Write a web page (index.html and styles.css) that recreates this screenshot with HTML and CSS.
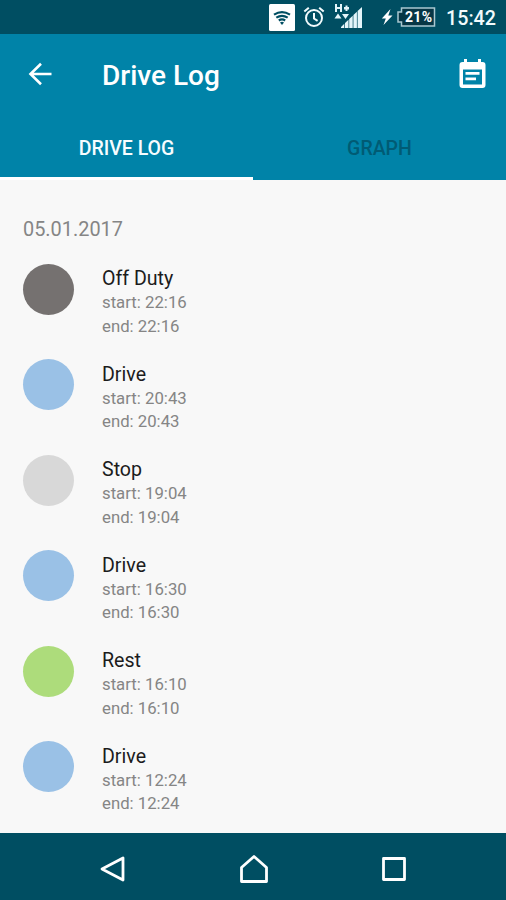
FILE: index.html
```html
<!DOCTYPE html>
<html lang="en">
<head>
<meta charset="utf-8">
<title>Drive Log</title>
<link rel="stylesheet" href="styles.css">
</head>
<body>
<div class="screen">
  <div class="status">
    <svg class="wifi" width="26" height="27" viewBox="0 0 26 27"><rect width="26" height="27" rx="1.5" fill="#fff"/><g fill="none" stroke="#004e62" stroke-width="2.200"><path d="M5 10.600Q13 5.600 21 10.600M7.300 13.600Q13 10 18.700 13.600M9.800 16.500Q13 14.300 16.200 16.500"/></g><path d="M11 18.400Q13 17 15 18.400L13 21z" fill="#004e62"/></svg>
    <svg class="alarm" width="22" height="22" viewBox="0 0 22 22" fill="none" stroke="#f2fbfd" stroke-width="2"><circle cx="11" cy="12" r="8"/><path d="M11 7v5.500l3.600 2.300M1.300 5.600l4.500-3.900M20.700 5.600l-4.500-3.900"/></svg>
    <svg class="signal" width="29" height="26" viewBox="0 0 29 26"><g fill="#e4f5fa"><path d="M1 1h2v3h3V1h2v8H6V6H3v3H1zM10 4h1.500V2.500h2V4H15v2.500h-1.500V8h-2V6.500H10zM.5 15.500l3.500-5 3.500 5zM8 11h7l-3.500 5z"/><path d="M7 25v-1l3.300-3.200V25zM11 25v-5l3.500-3.200V25zM15.200 25v-9l3.500-3.200V25zM19.400 25V12l3.500-3.200V25zM23.600 25V8L28 4v21z"/></g></svg>
    <svg class="bolt" width="12" height="18" viewBox="0 0 12 18"><path d="M9.500 1L.8 10.500h4L2.500 17 11.500 7.500H7.300z" fill="#fff"/></svg>
    <svg class="case" width="39" height="20" viewBox="0 0 39 20"><path d="M4.500 1h33v18h-33v-4H1V5h3.500z" fill="#063645" stroke="#a9c8d1" stroke-width="1.500"/><text class="percent" x="21.500" y="15" text-anchor="middle" textLength="27">21%</text></svg>
    <span class="clock">15:42</span>
  </div>
  <header class="header">
    <div class="toolbar">
      <svg class="back" width="24" height="24" viewBox="0 0 24 24" fill="none" stroke="#fff" stroke-width="2.600"><path d="M23.500 12H2.500M13 1.800L2.500 12 13 22.200"/></svg>
      <h1 class="title">Drive Log</h1>
      <svg class="calendar" width="27" height="31" viewBox="0 0 27 31"><path fill="#fff" fill-rule="evenodd" d="M5 1h3v3h11V1h3v3h1.500Q26.500 4 26.500 7v20q0 3-3 3h-20q-3 0-3-3V7q0-3 3-3H5zM4 11.500V26.500h19V11.500zM6.500 14h14v2.700h-14zM6.500 19.500h10.500v2.700h-10.500z"/></svg>
    </div>
    <nav class="tabs"><div class="tab active"><span>DRIVE LOG</span></div><div class="tab"><span>GRAPH</span></div></nav>
  </header>
  <main class="log">
    <div class="date">05.01.2017</div>
    <div class="entry"><i class="dot off"></i><div class="info"><b>Off Duty</b><span>start: 22:16</span><span>end: 22:16</span></div></div>
    <div class="entry"><i class="dot drive"></i><div class="info"><b>Drive</b><span>start: 20:43</span><span>end: 20:43</span></div></div>
    <div class="entry"><i class="dot stop"></i><div class="info"><b>Stop</b><span>start: 19:04</span><span>end: 19:04</span></div></div>
    <div class="entry"><i class="dot drive"></i><div class="info"><b>Drive</b><span>start: 16:30</span><span>end: 16:30</span></div></div>
    <div class="entry"><i class="dot rest"></i><div class="info"><b>Rest</b><span>start: 16:10</span><span>end: 16:10</span></div></div>
    <div class="entry"><i class="dot drive"></i><div class="info"><b>Drive</b><span>start: 12:24</span><span>end: 12:24</span></div></div>
  </main>
  <footer class="navbar">
    <svg width="28" height="30" viewBox="0 0 28 30"><path d="M24 4v22L3 15z"/></svg>
    <svg width="30" height="30" viewBox="0 0 30 30"><path d="M15 2.500L27.500 13.500v14h-25v-14z"/></svg>
    <svg width="28" height="30" viewBox="0 0 28 30"><path d="M3.500 4.500h21v21h-21z"/></svg>
  </footer>
</div>
</body>
</html>
```

FILE: styles.css
```css
* { box-sizing: border-box; }
body { margin: 0; font-family: Roboto, "Liberation Sans", sans-serif; }
.screen { width: 506px; height: 900px; display: flex; flex-direction: column; background: #f8f8f8; overflow: hidden; }
.status { height: 34px; flex: none; display: flex; align-items: center; padding-left: 269px; background: #004e62; }
.alarm { margin-left: 8px; }
.signal { margin: -2px 0 0 9px; }
.bolt { margin-left: 18px; }
.case { margin-left: 4px; }
.percent { font-size: 14px; font-weight: 700; fill: #fff; }
.clock { margin: 3px 0 0 10px; font-size: 19.700px; font-weight: 500; line-height: 24px; color: #f2fbfd; }
.header { height: 146px; flex: none; background: #0083a8; color: #fff; }
.toolbar { height: 82px; display: flex; align-items: center; padding-left: 28px; }
.back { margin-top: -2px; }
.title { margin: 2px 0 0 50px; width: 358px; flex: none; font-size: 28px; font-weight: 500; line-height: 36px; }
.calendar { margin: -4px 0 0 -1px; flex: none; }
.tabs { display: flex; height: 64px; }
.tab { width: 253px; padding-top: 21px; text-align: center; font-size: 19.500px; line-height: 24px; font-weight: 500; color: #005b74; }
.tab.active { color: #f6fdff; border-bottom: 3px solid #fff; }
.log { flex: 1; min-height: 0; padding: 37px 23px 0; }
.date { height: 46.500px; font-size: 19.900px; line-height: 25px; color: #858585; }
.entry { display: flex; height: 95.600px; }
.dot { width: 51px; height: 51px; border-radius: 50%; flex: none; }
.off { background: #757170; }
.drive { background: #9ac1e6; }
.stop { background: #d8d8d8; }
.rest { background: #addc7b; }
.info { margin-left: 28px; padding-top: 2.500px; display: flex; flex-direction: column; }
.info b { font-size: 19.600px; font-weight: 400; line-height: 25px; color: #1c1c1c; }
.info span { font-size: 16.750px; line-height: 23.500px; color: #858585; }
.navbar { height: 67px; flex: none; display: flex; justify-content: space-between; align-items: center; padding: 4px 98px 0 99px; background: #004e62; }
.navbar svg { fill: none; stroke: #fff; stroke-width: 2.800; stroke-linejoin: round; }
```
